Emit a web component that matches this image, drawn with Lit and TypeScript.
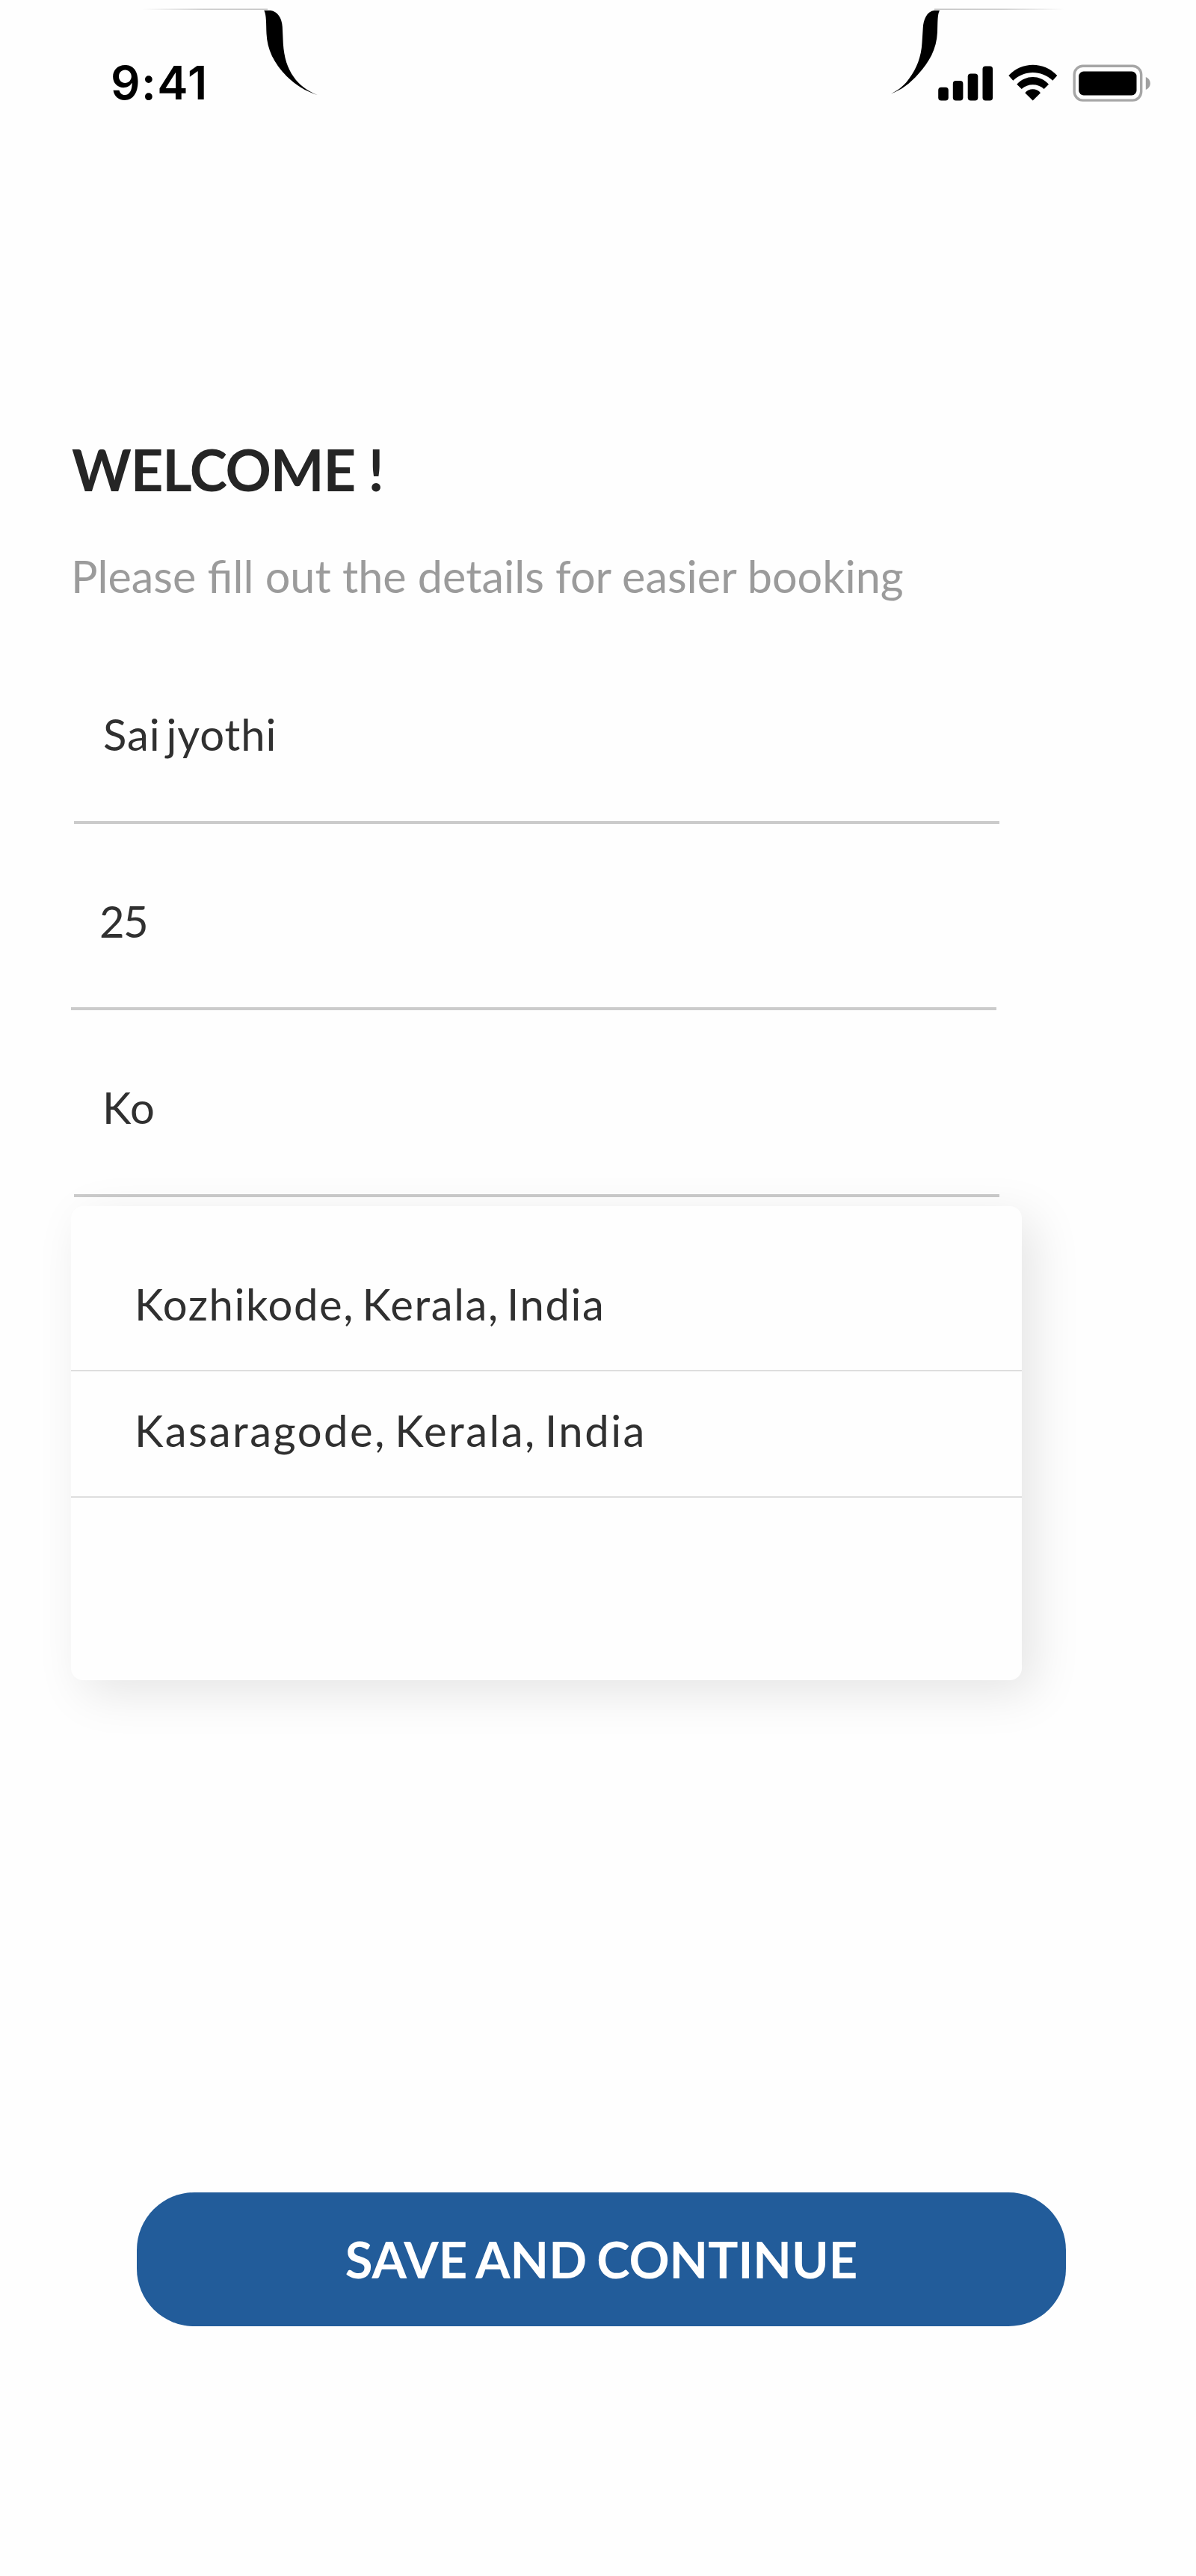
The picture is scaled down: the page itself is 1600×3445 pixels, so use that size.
import { LitElement, html, css } from "lit";
import { customElement } from "lit/decorators.js";

interface Field { value: string; kind: string; }

@customElement("app-root")
class AppRoot extends LitElement {
  static styles = css`
    :host { display: block; }
    * { box-sizing: border-box; }
    .screen {
      position: relative; width: 1600px; height: 3445px; overflow: hidden;
      display: flex; flex-direction: column; background: #fefefe; color: #303030;
      font-family: Lato, "Open Sans", sans-serif;
    }
    .notch { position: absolute; top: 0; left: 0; width: 1600px; height: 140px; }
    .status { display: flex; align-items: flex-start; justify-content: space-between; height: 582px; padding: 73px 60px 0 148px; }
    .time { font: 600 62px/75px Inter, sans-serif; letter-spacing: 1.4px; color: #000; }
    .indicators { display: flex; gap: 20px; padding-top: 13px; }
    .indicators svg { display: block; height: 50px; }
    .welcome { margin: 0; padding-left: 96px; font-size: 76px; line-height: 92px; font-weight: 700; letter-spacing: -1.15px; color: #252525; }
    .hint { margin: 0; padding: 60px 0 0 95px; height: 178px; font-size: 59.35px; line-height: 72px; color: #9b9b9b; }
    .field { width: 1238px; height: 249.5px; margin-left: 99px; padding: 95px 0 0 39px; border-bottom: 4px solid #cbcbcb; font-size: 58px; line-height: 70px; }
    .field.name { letter-spacing: 0.9px; word-spacing: -7.8px; }
    .field.age { margin-left: 95px; padding-left: 38px; letter-spacing: -1.6px; }
    .field.place { letter-spacing: 0.8px; padding-left: 38px; }
    .suggestions {
      width: 1272px; height: 634px; margin: 12px 0 0 95px; padding: 52px 0 0;
      list-style: none; border-radius: 16px; background: #fefefe;
      box-shadow: 17px 17px 64px rgba(0, 0, 0, 0.1);
    }
    .suggestion { height: 169px; padding: 44px 0 0 85px; border-bottom: 2px solid #dedede; font-size: 58px; line-height: 70px; letter-spacing: 1.6px; word-spacing: -6px; }
    .suggestion.long { letter-spacing: 2.5px; }
    .save {
      margin: 685px 0 0 183px; width: 1243px; height: 179px; padding: 0 0 1px; border: 0; border-radius: 77px;
      background: #225c9a; color: #fff; font: 700 67px/80px Lato, sans-serif; word-spacing: -3.3px;
    }
  `;

  private fields: Field[] = [
    { value: "Sai jyothi", kind: "name" },
    { value: "25", kind: "age" },
    { value: "Ko", kind: "place" },
  ];

  render() {
    return html`
      <main class="screen">
        <svg class="notch" viewBox="0 0 1600 140" aria-hidden="true">
          <defs>
            <linearGradient id="l" x1="190" x2="358" y1="0" y2="0" gradientUnits="userSpaceOnUse"><stop stop-color="#000" stop-opacity="0"/><stop offset=".5" stop-color="#000" stop-opacity=".22"/><stop offset="1" stop-color="#000" stop-opacity=".25"/></linearGradient>
            <linearGradient id="r" x1="1424" x2="1256" y1="0" y2="0" gradientUnits="userSpaceOnUse"><stop stop-color="#000" stop-opacity="0"/><stop offset=".5" stop-color="#000" stop-opacity=".22"/><stop offset="1" stop-color="#000" stop-opacity=".25"/></linearGradient>
          </defs>
          <rect x="190" y="11.6" width="168" height="1.4" fill="url(#l)" />
          <rect x="1250" y="11.6" width="174" height="1.4" fill="url(#r)" />
          <path d="M353.3 14H362C371 15 377.3 24 377.8 36L378.8 58C380 77 384.500 91 393 103C400 113 409 120.500 425 127.300C408 121.500 396 114 383.500 102C366 84 357.500 66 356.500 45C356 32 356.500 20 353.300 14Z" />
          <path d="M1257 14H1250C1240 15 1235.300 26 1234.700 38L1233.500 57C1232.500 76 1226 92 1217 104C1211 113 1203 120 1192 125.500C1206 120 1217 112 1228.500 99C1243 83 1253 66 1254 43C1254.500 30 1254 19 1257 14Z" />
        </svg>
        <header class="status">
          <span class="time">9:41</span>
          <div class="indicators">
            <svg width="74" height="50" viewBox="1254.500 86 74 50"><rect x="1254.700" y="116.700" width="13.600" height="17.700" rx="4"/><rect x="1274.300" y="108" width="13.600" height="26.400" rx="4"/><rect x="1294.200" y="98.500" width="13.600" height="35.900" rx="4"/><rect x="1314" y="88.500" width="13.600" height="45.900" rx="4"/></svg>
            <svg width="66" height="50" viewBox="1348 86 66 50"><path d="M1348.300 101C1366 82 1395.500 82 1413.300 101L1407.300 107.700C1392 93.400 1369.500 93.400 1354.300 107.700Z"/><path d="M1359.300 112.700C1371 99.600 1390.500 99.600 1402 112.700L1395.700 119C1387.500 111.200 1374 111.200 1365.700 119Z"/><path d="M1370.300 124.300C1375 117.600 1386.300 117.600 1391 124.300L1380.700 134.600Z"/></svg>
            <svg width="105" height="50" viewBox="1434.500 86 105 50"><rect x="1436.700" y="88.300" width="89.500" height="45.800" rx="11.500" fill="none" stroke="#a6a6a6" stroke-width="3.400"/><rect x="1442.700" y="95.500" width="77.300" height="32" rx="6.500"/><path d="M1532.300 103C1540.300 106 1540.300 117 1532.300 120Z" fill="#a0a0a0"/></svg>
          </div>
        </header>
        <h1 class="welcome">WELCOME !</h1>
        <p class="hint">Please fill out the details for easier booking</p>
        ${this.fields.map((f) => html`<div class="field ${f.kind}">${f.value}</div>`)}
        <ul class="suggestions">
          <li class="suggestion">Kozhikode, Kerala, India</li>
          <li class="suggestion long">Kasaragode, Kerala, India</li>
        </ul>
        <button class="save" type="button">SAVE AND CONTINUE</button>
      </main>`;
  }
}
